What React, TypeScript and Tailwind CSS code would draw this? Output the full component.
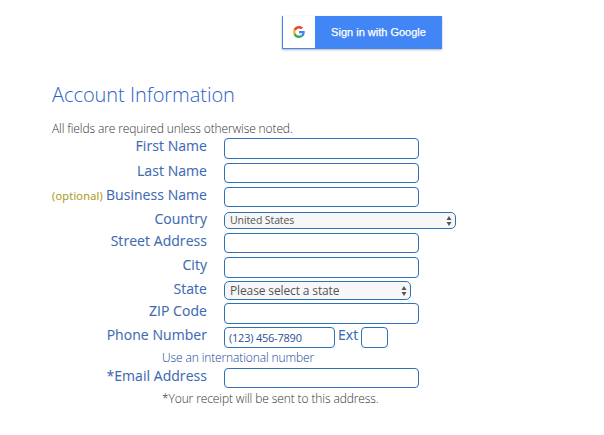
import type { ReactNode } from "react";

const fieldClass =
  "block rounded-[4px] border border-[#2f71b8] bg-white px-1 text-[11px] tracking-[-0.22px] text-[#2a4f9a] outline-none";

const labelClass =
  "text-[14px] leading-4 tracking-[0.05px] text-[#3d6ab2] [-webkit-text-stroke:0.1px_#3d6ab2]";

function GoogleIcon() {
  return (
    <svg viewBox="0 0 48 48" className="h-3 w-3">
      <path
        fill="#EA4335"
        d="M24 9.5c3.54 0 6.71 1.22 9.21 3.6l6.85-6.85C35.9 2.38 30.47 0 24 0 14.62 0 6.51 5.38 2.56 13.22l7.98 6.19C12.43 13.72 17.74 9.5 24 9.5z"
      />
      <path
        fill="#4285F4"
        d="M46.98 24.55c0-1.57-.15-3.09-.38-4.55H24v9.02h12.94c-.58 2.96-2.26 5.48-4.78 7.18l7.73 6c4.51-4.18 7.09-10.36 7.09-17.65z"
      />
      <path
        fill="#FBBC05"
        d="M10.53 28.59c-.48-1.45-.76-2.99-.76-4.59s.27-3.14.76-4.59l-7.98-6.19C.92 16.46 0 20.12 0 24c0 3.88.92 7.54 2.56 10.78l7.97-6.19z"
      />
      <path
        fill="#34A853"
        d="M24 48c6.48 0 11.93-2.13 15.89-5.81l-7.73-6c-2.15 1.45-4.92 2.3-8.16 2.3-6.26 0-11.57-4.22-13.47-9.91l-7.98 6.19C6.51 42.62 14.62 48 24 48z"
      />
    </svg>
  );
}

function Row({
  label,
  optional,
  className,
  children,
}: {
  label: string;
  optional?: boolean;
  className: string;
  children: ReactNode;
}) {
  return (
    <div className={`flex items-start ${className}`}>
      <label className={`w-[155px] shrink-0 text-right whitespace-nowrap ${labelClass}`}>
        {optional && (
          <span className="text-[11px] tracking-[0.2px] text-[#a89b1c] [-webkit-text-stroke:0.1px_#a89b1c]">
            (optional){" "}
          </span>
        )}
        {label}
      </label>
      <div className="ml-[17px] flex">{children}</div>
    </div>
  );
}

function Select({ value, className }: { value: string; className: string }) {
  return (
    <div className="grid items-center">
      <select
        className={`col-start-1 row-start-1 appearance-none rounded-[5px] border border-[#2f71b8] bg-[#f7f7f7] px-[5px] text-[#555] outline-none ${className}`}
      >
        <option>{value}</option>
      </select>
      <svg
        viewBox="0 0 6 10"
        className="pointer-events-none col-start-1 row-start-1 mr-1 h-2.5 w-1.5 justify-self-end"
        fill="#555"
      >
        <path d="M3 0l2.5 4h-5zM3 10l2.5-4h-5z" />
      </svg>
    </div>
  );
}

export default function App() {
  return (
    <div className="h-[435px] w-[604px] overflow-hidden bg-white pt-4 pl-[52px] font-['Open_Sans',sans-serif]">
      <button className="ml-[230px] flex h-[33px] w-40 items-center bg-[#4285f4] pb-px pl-px shadow-[0_1px_2px_rgba(0,0,0,0.3)]">
        <span className="flex h-8 w-8 items-center justify-center bg-white">
          <GoogleIcon />
        </span>
        <span className="flex-1 text-center font-['Liberation_Sans',sans-serif] text-[11px] text-white [-webkit-text-stroke:0.25px_white]">
          Sign in with Google
        </span>
      </button>

      <h1 className="mt-[34px] text-[20px] leading-6 font-light tracking-[-0.04px] text-[#2a62c9]">
        Account Information
      </h1>
      <p className="mt-3.5 h-[17px] text-[12px] leading-4 font-light tracking-[-0.12px] text-[#333]">
        All fields are required unless otherwise noted.
      </p>

      <form>
        <Row label="First Name" className="h-[25px]">
          <input className={`${fieldClass} h-[21px] w-[195px]`} />
        </Row>
        <Row label="Last Name" className="h-6">
          <input className={`${fieldClass} h-5 w-[195px]`} />
        </Row>
        <Row label="Business Name" optional className="h-[25px]">
          <input className={`${fieldClass} h-5 w-[195px]`} />
        </Row>
        <Row label="Country" className="h-[21px] [&>label]:leading-[14px]">
          <Select value="United States" className="h-[17px] w-[232px] text-[10.5px] tracking-[-0.1px]" />
        </Row>
        <Row label="Street Address" className="h-6">
          <input className={`${fieldClass} h-5 w-[195px]`} />
        </Row>
        <Row label="City" className="h-6">
          <input className={`${fieldClass} h-[21px] w-[195px]`} />
        </Row>
        <Row label="State" className="h-[22px]">
          <Select value="Please select a state" className="h-[19px] w-[187px] text-[12px] tracking-[-0.13px]" />
        </Row>
        <Row label="ZIP Code" className="h-6">
          <input className={`${fieldClass} h-[21px] w-[195px]`} />
        </Row>
        <Row label="Phone Number" className="h-[21px]">
          <input className={`${fieldClass} h-[21px] w-[111px]`} defaultValue="(123) 456-7890" />
          <label className={`w-[26px] pl-[3px] ${labelClass}`}>Ext</label>
          <input className={`${fieldClass} h-[21px] w-[27px]`} />
        </Row>
        <p className="ml-[110px] h-5 pt-0.5 text-[12px] leading-4 font-light tracking-[-0.12px] text-[#143f9c]">
          Use an international number
        </p>
        <Row label="*Email Address" className="h-5">
          <input className={`${fieldClass} h-5 w-[195px]`} />
        </Row>
        <p className="ml-[110px] pt-[3px] text-[12px] leading-4 font-light tracking-[-0.11px] text-[#333]">
          *Your receipt will be sent to this address.
        </p>
      </form>
    </div>
  );
}
